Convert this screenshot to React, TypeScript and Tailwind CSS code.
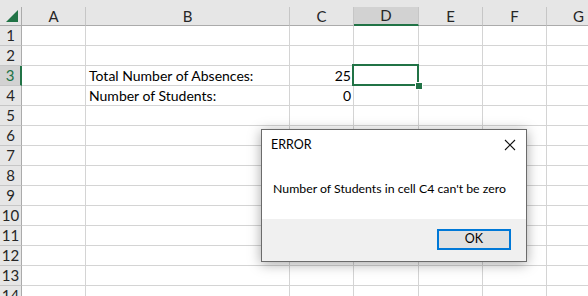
import React from "react";

const cols = ["A", "B", "C", "D", "E", "F", "G"];
const rows = Array.from({ length: 14 }, (_, i) => i + 1);

export default function App() {
  const font = { fontFamily: "Lato, 'Open Sans', sans-serif" };
  return (
    <div className="relative w-[588px] h-[296px] overflow-hidden bg-white" style={font}>
      <div className="h-[7px] bg-[#e6e6e6]" />
      <div className="grid grid-cols-[22px_64px_204px_64px_65px_64px_64px_64px] auto-rows-[20px] grid-rows-[19px]">
        {/* header */}
        <div className="relative bg-[#e6e6e6] border-r border-b border-[#ababab]">
          <div className="absolute right-[3px] bottom-[3px] w-0 h-0 border-l-[12px] border-l-transparent border-b-[12px] border-b-[#217346]" />
        </div>
        {cols.map((c) => (
          <div
            key={c}
            className={
              "flex items-center justify-center text-[15px] text-[#262626] border-r border-[#c6c6c6] " +
              (c === "D"
                ? "bg-[#d2d2d2] border-b-2 border-b-[#217346] text-[#217346]"
                : "bg-[#e6e6e6] border-b border-b-[#ababab]")
            }
          >
            {c}
          </div>
        ))}
        {rows.map((r) => (
          <React.Fragment key={r}>
            <div
              className={
                "flex items-center justify-center text-[15px] border-b border-[#c6c6c6] " +
                (r === 3
                  ? "bg-[#d2d2d2] border-r-2 border-r-[#217346] text-[#217346]"
                  : "bg-[#e6e6e6] border-r border-r-[#ababab] text-[#262626]")
              }
            >
              {r}
            </div>
            {cols.map((c) => {
              let content: React.ReactNode = null;
              let align = "justify-start pl-[3px]";
              if (c === "B" && r === 3) content = "Total Number of Absences:";
              if (c === "B" && r === 4) content = "Number of Students:";
              if (c === "C" && r === 3) {
                content = "25";
                align = "justify-end pr-[2px]";
              }
              if (c === "C" && r === 4) {
                content = "0";
                align = "justify-end pr-[2px]";
              }
              return (
                <div
                  key={c}
                  className={
                    "relative flex items-center text-[14px] text-black whitespace-nowrap border-r border-b border-[#d4d4d4] " +
                    align
                  }
                >
                  {content}
                  {c === "D" && r === 3 && (
                    <>
                      <div className="absolute z-10 left-[-2px] top-[-2px] right-[-1px] bottom-[-1px] border-2 border-[#217346]" />
                      <div className="absolute z-20 right-[-5px] bottom-[-5px] w-[8px] h-[8px] bg-[#217346] border border-white" />
                    </>
                  )}
                </div>
              );
            })}
          </React.Fragment>
        ))}
      </div>

      {/* dialog */}
      <div
        className="absolute z-30 left-[261px] top-[129px] w-[266px] h-[133px] bg-white border border-[#6b6b6b] flex flex-col shadow-[0_2px_12px_rgba(0,0,0,0.35)]"
        style={{ fontFamily: "Lato, 'Noto Sans', sans-serif" }}
      >
        <div className="h-[30px] flex items-center justify-between pl-[9px] pr-[8px]">
          <span className="text-[12.5px] text-black">ERROR</span>
          <svg width="12" height="12" viewBox="0 0 12 12" className="mr-[2px]">
            <path d="M1 1 L11 11 M11 1 L1 11" stroke="#111" strokeWidth="1.1" />
          </svg>
        </div>
        <div className="flex-1 flex items-center pl-[11px] text-[12.3px] text-black">
          Number of Students in cell C4 can't be zero
        </div>
        <div className="h-[42px] bg-[#f0f0f0] flex items-start justify-end pt-[10px] pr-[15px]">
          <div className="w-[74px] h-[21px] bg-[#e1e1e1] border-2 border-[#0078d7] flex items-center justify-center text-[12.5px] text-black">
            OK
          </div>
        </div>
      </div>
    </div>
  );
}
